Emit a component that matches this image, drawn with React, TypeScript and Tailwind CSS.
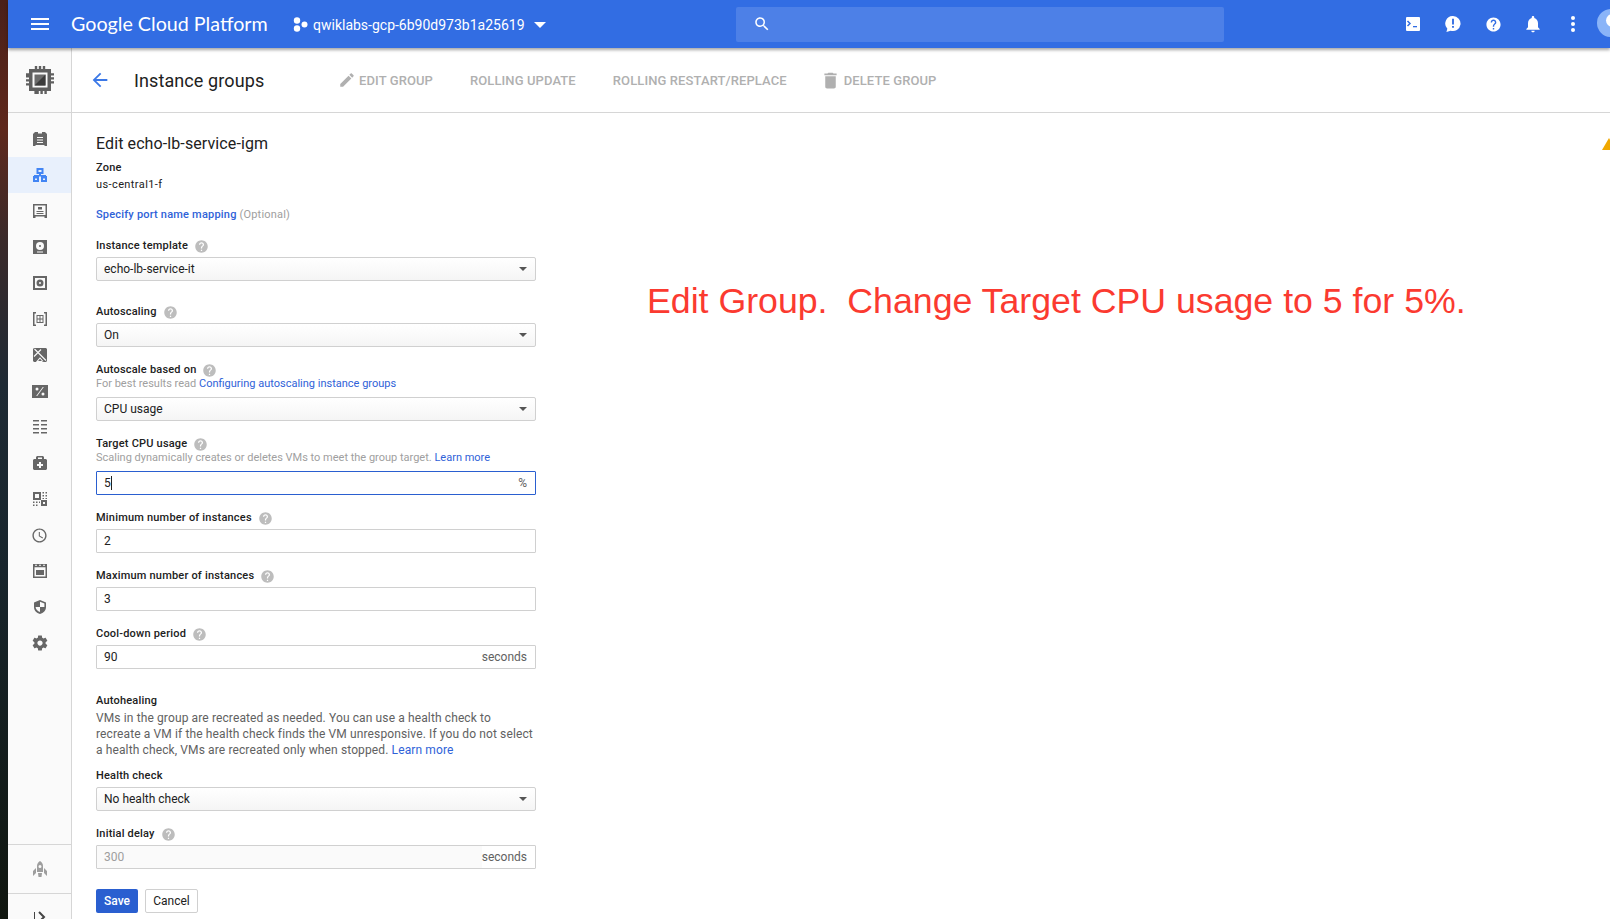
import React from "react";

const P = {
  menu: "M3 18h18v-2H3v2zm0-5h18v-2H3v2zm0-7v2h18V6H3z",
  search:
    "M15.5 14h-.79l-.28-.27C15.41 12.59 16 11.11 16 9.5 16 5.91 13.09 3 9.5 3S3 5.91 3 9.5 5.91 16 9.5 16c1.61 0 3.09-.59 4.23-1.57l.27.28v.79l5 4.99L20.49 19l-4.99-5zm-6 0C7.01 14 5 11.99 5 9.5S7.01 5 9.5 5 14 7.01 14 9.5 11.99 14 9.5 14z",
  back: "M20 11H7.83l5.59-5.59L12 4l-8 8 8 8 1.41-1.41L7.83 13H20v-2z",
  edit: "M3 17.25V21h3.75L17.81 9.94l-3.75-3.75L3 17.25zM20.71 7.04c.39-.39.39-1.02 0-1.41l-2.34-2.34c-.39-.39-1.02-.39-1.41 0l-1.83 1.83 3.75 3.75 1.83-1.83z",
  trash: "M6 19c0 1.1.9 2 2 2h8c1.1 0 2-.9 2-2V7H6v12zM19 4h-3.5l-1-1h-5l-1 1H5v2h14V4z",
  help: "M12 2C6.48 2 2 6.48 2 12s4.48 10 10 10 10-4.48 10-10S17.52 2 12 2zm1 17h-2v-2h2v2zm2.07-7.75l-.9.92C13.45 12.9 13 13.5 13 15h-2v-.5c0-1.1.45-2.1 1.17-2.83l1.24-1.26c.37-.36.59-.86.59-1.41 0-1.1-.9-2-2-2s-2 .9-2 2H8c0-2.21 1.79-4 4-4s4 1.79 4 4c0 .88-.36 1.68-.93 2.25z",
  bell: "M12 22c1.1 0 2-.9 2-2h-4c0 1.1.89 2 2 2zm6-6v-5c0-3.07-1.64-5.64-4.5-6.32V4c0-.83-.67-1.5-1.5-1.5s-1.5.67-1.5 1.5v.68C7.63 5.36 6 7.92 6 11v5l-2 2v1h16v-1l-2-2z",
  clock:
    "M11.99 2C6.47 2 2 6.48 2 12s4.47 10 9.99 10C17.52 22 22 17.52 22 12S17.52 2 11.99 2zM12 20c-4.42 0-8-3.58-8-8s3.58-8 8-8 8 3.58 8 8-3.58 8-8 8zm.5-13H11v6l5.25 3.15.75-1.23-4.5-2.67z",
  gear: "M19.43 12.98c.04-.32.07-.64.07-.98s-.03-.66-.07-.98l2.11-1.65c.19-.15.24-.42.12-.64l-2-3.46c-.12-.22-.39-.3-.61-.22l-2.49 1c-.52-.4-1.08-.73-1.69-.98l-.38-2.65C14.46 2.18 14.25 2 14 2h-4c-.25 0-.46.18-.49.42l-.38 2.65c-.61.25-1.17.59-1.69.98l-2.49-1c-.23-.09-.49 0-.61.22l-2 3.46c-.13.22-.07.49.12.64l2.11 1.65c-.04.32-.07.65-.07.98s.03.66.07.98l-2.11 1.65c-.19.15-.24.42-.12.64l2 3.46c.12.22.39.3.61.22l2.49-1c.52.4 1.08.73 1.69.98l.38 2.65c.03.24.24.42.49.42h4c.25 0 .46-.18.49-.42l.38-2.65c.61-.25 1.17-.59 1.69-.98l2.49 1c.23.09.49 0 .61-.22l2-3.46c.12-.22.07-.49-.12-.64l-2.11-1.65zM12 15.5c-1.93 0-3.5-1.57-3.5-3.5s1.57-3.5 3.5-3.5 3.5 1.57 3.5 3.5-1.57 3.5-3.5 3.5z",
};

function Icon({ d, className }: { d: string; className: string }) {
  return (
    <svg viewBox="0 0 24 24" fill="currentColor" className={className}>
      <path d={d} />
    </svg>
  );
}

// sidebar glyphs, drawn on a 14 box
const navIcons: React.ReactNode[] = [
  <path key="a" fillRule="evenodd" d="M2 0h3v1.500h4V0h3l2 2v12h-2.500v-1h-9v1H0V2zM4 5v1h6V5zM4 7.500v1h6v-1zM4 10v1h6v-1z" />,
  <path key="b" fillRule="evenodd" d="M3.500 0h7v6H8v1h5v1h1v6H8V8.500H6V14H0V8h1V7h5V6H3.500zM5.500 2v2h3V2zM2 10.500v1.500h2v-1.500zM10 10.500v1.500h2v-1.500z" />,
  <path key="c" fillRule="evenodd" d="M0 0h14v14h-2.500v-1.500h-9V14H0zM1.500 1.500v9.500h11V1.500zM5 3h4v2.500H5zM3.500 7h7v1h-7zM3.500 9h7v1h-7z" />,
  <path key="d" fillRule="evenodd" d="M0 0h14v14H0zM7 2a4 4 0 1 0 0 8 4 4 0 0 0 0-8zM7 5a1 1 0 1 1 0 2 1 1 0 0 1 0-2zM4 11.500v1h6v-1z" />,
  <path key="e" fillRule="evenodd" d="M0 0h14v14H0zM2 2v10h10V2zM7 3.500a3.500 3.500 0 1 1 0 7 3.500 3.500 0 0 1 0-7zM7 6a1 1 0 1 0 0 2 1 1 0 0 0 0-2z" />,
  <path key="f" fillRule="evenodd" d="M0 0h3v1.500H1.500v11H3V14H0zM11 0h3v14h-3v-1.500h1.500v-11H11zM3.500 3h7v8h-7zM4.500 4v2.500h2V4zM7.500 4v2.500h2V4zM4.500 7.500V10h2V7.500zM7.500 7.500V10h2V7.500z" />,
  <g key="g">
    <path d="M1 0h12l1 1v12l-1 1H1l-1-1V1z" />
    <path d="M1.500 1 13 12.500M1 8.500 8 1.500M9 13.500H4L7 10l3 3.500" fill="none" stroke="#fafafa" strokeWidth="1.100" />
  </g>,
  <path key="h" fillRule="evenodd" d="M0 0h16v13H0zM5 2.500a1.500 1.500 0 1 0 0 3 1.500 1.500 0 0 0 0-3zM11 7.500a1.500 1.500 0 1 0 0 3 1.500 1.500 0 0 0 0-3zM10.800 2 4.200 11h1L11.800 2z" />,
  <path key="i" d="M0 0h6v1.500H0zM8 0h6v1.500H8zM0 4h6v1.500H0zM8 4h6v1.500H8zM0 8h6v1.500H0zM8 8h6v1.500H8zM0 12h6v1.500H0zM8 12h6v1.500H8z" />,
  <path key="j" fillRule="evenodd" d="M4 0h6l1 1v2h2l1 1v9l-1 1H1l-1-1V4l1-1h2V1zM5 1.500V3h4V1.500zM6 6v2H4v2h2v2h2v-2h2V8H8V6z" />,
  <path key="k" fillRule="evenodd" d="M0 0h8v8H0zM2 2v4h4V2zM9.500 0H11v1.500H9.500zM12.500 0H14v1.500h-1.500zM9.500 3H11v1.500H9.500zM12.500 3H14v1.500h-1.500zM9.500 6H11v1H9.500zM12.500 6H14v1h-1.500zM0 9.500h1.500V11H0zM3 9.500h1.500V11H3zM6 9.500h1V11H6zM0 12.500h1.500V14H0zM3 12.500h1.500V14H3zM8 8h6v6H8zM10 10v2h2v-2z" />,
  null,
  <path key="m" fillRule="evenodd" d="M0 0h14v14H0zM2 .8v1h2v-1zM6 .8v1h2v-1zM10 .8v1h2v-1zM1.500 3.300v9.200h11V3.300zM3 6h8v5H3z" />,
  <path key="n" fillRule="evenodd" d="M7 0l6 2.500V7c0 3.500-2.500 6-6 7-3.500-1-6-3.500-6-7V2.500zM7 1.800v5.200H2.600c.2 2.300 2 4.200 4.400 5.100V7h4.400V3.500z" />,
];

function Sidebar() {
  return (
    <div className="w-[64px] shrink-0 flex flex-col bg-[#fafafa] border-r border-[#d6d6d6]">
      <div className="h-[65px] shrink-0 flex items-center justify-center border-b border-[#d6d6d6] text-[#5f5f5f]">
        <svg viewBox="0 0 30 30" className="w-[30px] h-[30px]" fill="currentColor">
          <path fillRule="evenodd" d="M8 4h1.800V1h2.400v3h1.600V1h2.400v3h1.600V1h2.400v3H26v4.200h3v2.400h-3v1.600h3v2.400h-3v1.600h3v2.400h-3V26h-4.200v3h-2.400v-3h-1.600v3h-2.400v-3h-1.600v3H9.400v-3H4v-5.400H1v-2.400h3v-1.600H1v-2.400h3v-1.600H1V8.200h3V4zM7.500 7.500v15h15v-15z" />
          <path d="M9.500 9.500h11v11h-11z" fill="#6b6b6b" />
          <path d="M20.500 9.500v11h-11z" fill="#3c3c3c" />
        </svg>
      </div>
      <div className="flex flex-col pt-[8px] text-[#666666]">
        {navIcons.map((icon, i) => (
          <div
            key={i}
            className={`h-[36px] flex items-center justify-center ${i === 1 ? "bg-[#e8f0fc] text-[#4285f4]" : ""}`}
          >
            {icon === null ? (
              <Icon d={P.clock} className="w-[17px] h-[17px]" />
            ) : (
              <svg
                viewBox={i === 7 ? "0 0 16 13" : "0 0 14 14"}
                className={i === 7 ? "w-[16px] h-[13px]" : "w-[14px] h-[14px]"}
                fill="currentColor"
              >
                {icon}
              </svg>
            )}
          </div>
        ))}
        <div className="h-[36px] flex items-center justify-center">
          <Icon d={P.gear} className="w-[18px] h-[18px]" />
        </div>
      </div>
      <div className="mt-[183px] h-[50px] shrink-0 flex items-center justify-center border-y border-[#d6d6d6] text-[#9e9e9e]">
        <svg viewBox="0 0 16 17" className="w-[16px] h-[17px]" fill="currentColor">
          <path fillRule="evenodd" d="M8 0c2 1.200 3 3 3 5v6H5V5c0-2 1-3.800 3-5zM8 4a1.500 1.500 0 1 0 0 3 1.500 1.500 0 0 0 0-3zM4 7v5l-3 3v-5zM12 7l3 3v5l-3-3zM6 12h4l-.5 4h-3z" />
        </svg>
      </div>
      <div className="flex-1 flex items-end justify-center overflow-hidden text-[#444444]">
        <svg viewBox="0 0 12 12" className="w-[12px] h-[12px] mb-[-4px]" fill="none" stroke="currentColor" strokeWidth="2">
          <path d="M0 1v10M5 1l5 5-5 5" />
        </svg>
      </div>
    </div>
  );
}

function Label({ text, help = true }: { text: string; help?: boolean }) {
  return (
    <div className="flex items-center h-[16px] text-[11px] leading-[16px] font-medium text-[#212121] tracking-[0.2px]">
      {text}
      {help && <Icon d={P.help} className="w-[15px] h-[15px] text-[#bdbdbd] ml-[6px]" />}
    </div>
  );
}

function Select({ value }: { value: string }) {
  return (
    <div className="h-[24px] flex items-center justify-between pl-[7px] pr-[8px] rounded-[2px] border border-[#d0d0d0] bg-gradient-to-b from-white to-[#f5f5f5] text-[12px] text-[#212121]">
      {value}
      <div className="w-0 h-0 border-x-[4px] border-x-transparent border-t-[4px] border-t-[#555555]" />
    </div>
  );
}

function Field({
  value,
  unit,
  focused,
  disabled,
}: {
  value: string;
  unit?: string;
  focused?: boolean;
  disabled?: boolean;
}) {
  return (
    <div
      className={`h-[24px] flex items-center justify-between text-[12px] border rounded-[1px] ${
        focused ? "border-[#2a5fd0]" : "border-[#d0d0d0]"
      }`}
    >
      <div
        className={`flex-1 h-full flex items-center pl-[7px] ${
          disabled ? "bg-[#fafafa] text-[#9e9e9e]" : "text-[#212121]"
        }`}
      >
        {value}
        {focused && <span className="w-px h-[14px] bg-[#212121]" />}
      </div>
      {unit && <span className="pr-[8px] text-[#616161]">{unit}</span>}
    </div>
  );
}

function ToolbarAction({ d, text, iconClass }: { d?: string; text: string; iconClass?: string }) {
  return (
    <div className="flex items-center gap-[3px] text-[#b0b0b0] text-[13px] font-medium tracking-[0.1px]">
      {d && <Icon d={d} className={iconClass || "w-[18px] h-[18px]"} />}
      <span className="mt-[2px]">{text}</span>
    </div>
  );
}

export default function App() {
  return (
    <div
      className="relative flex w-[1610px] h-[919px] overflow-hidden bg-white"
      style={{ fontFamily: "Roboto, sans-serif" }}
    >
      {/* desktop wallpaper peeking out on the left */}
      <div className="w-[8px] shrink-0 bg-[linear-gradient(to_bottom,#4a2018_0%,#5e281c_14%,#3a2a2a_26%,#1e2a34_42%,#18252c_62%,#10160f_100%)]" />

      <div className="flex-1 min-w-0 flex flex-col">
        {/* Top bar */}
        <header className="relative z-10 h-[48px] shrink-0 flex items-center bg-[#326de3] text-white shadow-[0_2px_3px_rgba(0,0,0,0.35)]">
          <Icon d={P.menu} className="w-[24px] h-[24px] ml-[20px]" />
          <span className="ml-[19px] w-[196px] whitespace-nowrap text-[19.700px]" style={{ fontFamily: "Lato, sans-serif" }}>
            Google Cloud Platform
          </span>
          <svg viewBox="0 0 15 15" className="w-[15px] h-[15px] ml-[26px]" fill="currentColor">
            <circle cx="4" cy="3.500" r="3.200" />
            <circle cx="4" cy="11.500" r="3.200" />
            <circle cx="11.500" cy="7.500" r="3" />
          </svg>
          <span className="ml-[5px] mt-[2px] w-[212px] whitespace-nowrap text-[14px]">qwiklabs-gcp-6b90d973b1a25619</span>
          <div className="ml-[9px] mt-[2px] w-0 h-0 border-x-[6px] border-x-transparent border-t-[6px] border-t-white" />
          <div className="ml-[190px] w-[488px] h-[35px] flex items-center bg-[#4d80e7] rounded-[2px] pl-[17px]">
            <Icon d={P.search} className="w-[18px] h-[18px]" />
          </div>
          <div className="ml-auto pr-[17px] flex items-center">
            <div className="w-[40px] flex justify-center">
              <svg viewBox="0 0 14 14" className="w-[14px] h-[14px]">
                <rect width="14" height="14" rx="1" fill="white" />
                <path d="M1.500 4l2.500 2.500-2.500 2.500" fill="none" stroke="#326de3" strokeWidth="1.500" />
                <path d="M7 9h4v1.300H7z" fill="#326de3" />
              </svg>
            </div>
            <div className="w-[40px] flex justify-center">
              <svg viewBox="0 0 16 17" className="w-[16px] h-[16px]">
                <path d="M8 0a8 8 0 1 1-2.500 15.600L1 17l1-3.500A8 8 0 0 1 8 0z" fill="white" />
                <path d="M7 3h2v6H7zM7 10.500h2v2H7z" fill="#326de3" />
              </svg>
            </div>
            <div className="w-[40px] flex justify-center">
              <Icon d={P.help} className="w-[17px] h-[17px]" />
            </div>
            <div className="w-[40px] flex justify-center">
              <Icon d={P.bell} className="w-[20px] h-[20px]" />
            </div>
            <div className="w-[40px] flex justify-center">
              <svg viewBox="0 0 4 16" className="w-[4px] h-[16px]" fill="currentColor">
                <circle cx="2" cy="2" r="2" />
                <circle cx="2" cy="8" r="2" />
                <circle cx="2" cy="14" r="2" />
              </svg>
            </div>
          </div>
          {/* avatar, cut off by the window edge */}
          <div className="absolute left-[1589px] top-[9px] w-[28px] h-[28px] rounded-full bg-[#8ab4f8] overflow-hidden">
            <div className="w-[13px] h-[13px] rounded-full bg-white ml-[9px] mt-[5px]" />
          </div>
        </header>

        <div className="flex-1 min-h-0 flex">
          <Sidebar />
          <div className="flex-1 min-w-0 flex flex-col">
            {/* Toolbar */}
            <div className="h-[65px] shrink-0 flex items-center border-b border-[#d6d6d6]">
              <Icon d={P.back} className="w-[22px] h-[22px] ml-[17px] text-[#3b78e7]" />
              <h1 className="ml-[23px] w-[204px] text-[18px] tracking-[0.1px] text-[#212121]">Instance groups</h1>
              <div className="flex items-center">
                <ToolbarAction d={P.edit} text="EDIT GROUP" />
                <div className="ml-[37px]"><ToolbarAction text="ROLLING UPDATE" /></div>
                <div className="ml-[37px]"><ToolbarAction text="ROLLING RESTART/REPLACE" /></div>
                <div className="ml-[33px]"><ToolbarAction d={P.trash} iconClass="w-[21px] h-[21px]" text="DELETE GROUP" /></div>
              </div>
            </div>

            {/* Form */}
            <div className="pl-[24px] w-[464px] pt-[20px]">
              <h2 className="text-[16px] leading-[22px] tracking-[0.1px] text-[#212121]">Edit echo-lb-service-igm</h2>
              <div className="mt-[5px] text-[11px] leading-[16px] font-medium text-[#212121] tracking-[0.2px]">Zone</div>
              <div className="mt-[1px] text-[11px] leading-[16px] text-[#212121] tracking-[0.4px]">us-central1-f</div>
              <div className="mt-[14px] text-[11px] leading-[16px] tracking-[0.2px]">
                <span className="text-[#2f62d8] font-medium">Specify port name mapping</span>{" "}
                <span className="text-[#9e9e9e]">(Optional)</span>
              </div>

              <div className="mt-[15px]"><Label text="Instance template" /></div>
              <div className="mt-[3px]"><Select value="echo-lb-service-it" /></div>

              <div className="mt-[23px]"><Label text="Autoscaling" /></div>
              <div className="mt-[3px]"><Select value="On" /></div>

              <div className="mt-[15px]"><Label text="Autoscale based on" /></div>
              <div className="h-[12px] flex items-center text-[11px] text-[#a0a0a0]">
                <span>For best results read&nbsp;</span>
                <span className="text-[#2f62d8]">Configuring autoscaling instance groups</span>
              </div>
              <div className="mt-[7px]"><Select value="CPU usage" /></div>

              <div className="mt-[15px]"><Label text="Target CPU usage" /></div>
              <div className="h-[13px] flex items-center text-[11px] text-[#a0a0a0]">
                <span>Scaling dynamically creates or deletes VMs to meet the group target.&nbsp;</span>
                <span className="text-[#2f62d8]">Learn more</span>
              </div>
              <div className="mt-[6px]"><Field value="5" unit="%" focused /></div>

              <div className="mt-[15px]"><Label text="Minimum number of instances" /></div>
              <div className="mt-[3px]"><Field value="2" /></div>

              <div className="mt-[15px]"><Label text="Maximum number of instances" /></div>
              <div className="mt-[3px]"><Field value="3" /></div>

              <div className="mt-[15px]"><Label text="Cool-down period" /></div>
              <div className="mt-[3px]"><Field value="90" unit="seconds" /></div>

              <div className="mt-[24px]"><Label text="Autohealing" help={false} /></div>
              <p className="mt-[1px] text-[12px] leading-[16px] whitespace-nowrap text-[#616161] tracking-[0.12px]">
                VMs in the group are recreated as needed. You can use a health check to
                <br />
                recreate a VM if the health check finds the VM unresponsive. If you do not select
                <br />
                a health check, VMs are recreated only when stopped.{" "}
                <span className="text-[#2f62d8]">Learn more</span>
              </p>

              <div className="mt-[10px]"><Label text="Health check" help={false} /></div>
              <div className="mt-[3px]"><Select value="No health check" /></div>

              <div className="mt-[15px]"><Label text="Initial delay" /></div>
              <div className="mt-[3px]"><Field value="300" unit="seconds" disabled /></div>

              <div className="mt-[20px] flex items-center gap-[7px]">
                <button className="h-[24px] w-[42px] rounded-[2px] bg-[#2a5fd0] text-white text-[12px] font-medium">Save</button>
                <button className="h-[24px] w-[53px] rounded-[2px] border border-[#d0d0d0] bg-white text-[#212121] text-[12px]">Cancel</button>
              </div>
            </div>
          </div>
        </div>
      </div>

      {/* warning triangle cut off by the window edge */}
      <div className="absolute right-[-6px] top-[138px] w-0 h-0 border-x-[7px] border-x-transparent border-b-[12px] border-b-[#f0a800]" />

      {/* screenshot annotation */}
      <div
        className="absolute left-[647px] top-[280px] text-[35.700px] leading-[42px] text-[#fb3a30] whitespace-pre"
        style={{ fontFamily: "'Liberation Sans', Arial, sans-serif" }}
      >
        {"Edit Group.  Change Target CPU usage to 5 for 5%."}
      </div>
    </div>
  );
}
